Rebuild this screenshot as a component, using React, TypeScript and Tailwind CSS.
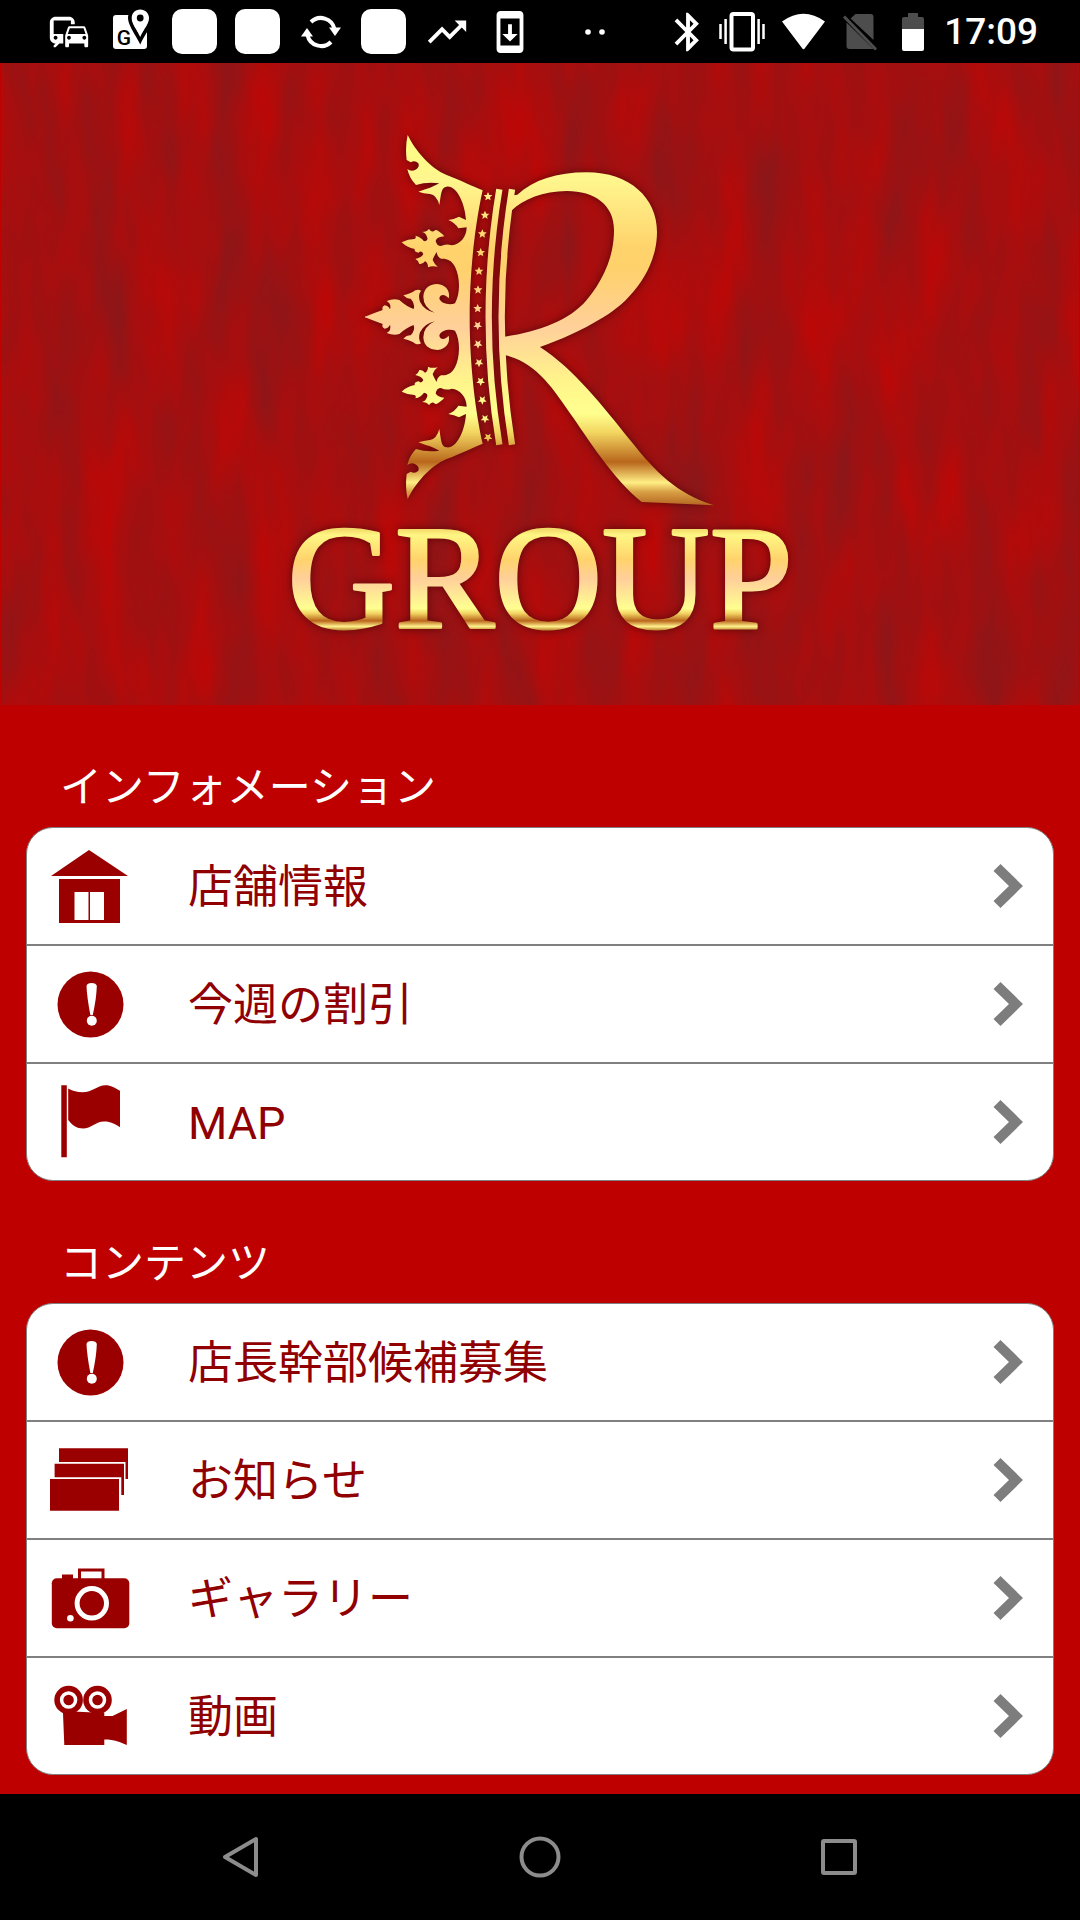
import type { ReactNode } from 'react';
import { MdBluetooth, MdCommute, MdSystemUpdate, MdTrendingUp } from 'react-icons/md';

type IconName = 'house' | 'alert' | 'flag' | 'papers' | 'camera' | 'video';

type MenuItem = { id: string; label: string; icon: IconName };

const SECTIONS: { title: string; items: MenuItem[] }[] = [
  {
    title: 'インフォメーション',
    items: [
      { id: 'shop', label: '店舗情報', icon: 'house' },
      { id: 'discount', label: '今週の割引', icon: 'alert' },
      { id: 'map', label: 'MAP', icon: 'flag' },
    ],
  },
  {
    title: 'コンテンツ',
    items: [
      { id: 'recruit', label: '店長幹部候補募集', icon: 'alert' },
      { id: 'news', label: 'お知らせ', icon: 'papers' },
      { id: 'gallery', label: 'ギャラリー', icon: 'camera' },
      { id: 'movie', label: '動画', icon: 'video' },
    ],
  },
];

const ICONS: Record<IconName, ReactNode> = {
  house: (
    <>
      <path d="M41 6 80 32H3Z" />
      <path d="M11 35H72V79H11Z" />
      <path fill="#fff" d="M26.500 48H40.500V76H26.500ZM42 48H56V76H42Z" />
    </>
  ),
  alert: (
    <>
      <circle cx="42.500" cy="42.500" r="33" />
      <path fill="#fff" d="M38.500 24Q39 21 43.600 21T48.800 24Q48.500 36 44.800 53H42.400Q39 36 38.500 24Z" />
      <circle cx="43.800" cy="58.700" r="5" fill="#fff" />
    </>
  ),
  flag: (
    <>
      <path d="M13.300 5.300H18.800V77.300H13.300Z" />
      <path d="M20.200 8.500C25 11 29 12.300 34.600 12.300C44 12.300 50 5.300 57.500 5.300C63 5.300 67 8 72 10.700V47.300C67 44 63 41.500 56 41.500C48 41.500 43 48.500 35 48.500C29 48.500 24 45 20.200 40Z" />
    </>
  ),
  papers: (
    <>
      <path d="M11 10.300H80V41H77.500V24H11Z" />
      <path d="M6.600 25.700H76V57H73.300V39.300H6.600Z" />
      <path d="M2 41H71V72.700H2Z" />
    </>
  ),
  camera: (
    <>
      <rect x="3.800" y="22.300" width="77.500" height="50" rx="5" />
      <path d="M14 24V18.500H25V24Z" />
      <path d="M31.500 23V14H55V23" fill="none" stroke="#9b0000" strokeWidth="3" />
      <circle cx="43.800" cy="47.300" r="14.700" fill="none" stroke="#fff" strokeWidth="5" />
      <circle cx="22.400" cy="62.300" r="3.300" fill="#fff" />
    </>
  ),
  video: (
    <>
      <circle cx="20.600" cy="26" r="14.300" />
      <circle cx="49.500" cy="26" r="14.300" />
      <circle cx="20.600" cy="26" r="7" fill="none" stroke="#fff" strokeWidth="3.500" />
      <circle cx="49.500" cy="26" r="7" fill="none" stroke="#fff" strokeWidth="3.500" />
      <path d="M14.900 37L56.300 39V42H64.500L78.800 35V71C72 68 67 65.500 56.300 65.500V71H16.300Z" />
    </>
  ),
};

// y centre of the crown in emblem units
const CROWN_AXIS = 591;

const STARS: [number, number][] = [
  [444, 229], [435, 285], [427, 341], [422, 397], [417, 453], [414, 509], [413, 565],
];

const STAR_POINTS = '0,-13 4,-4 13,-4 6,3 8,12 0,7 -8,12 -6,3 -13,-4 -4,-4';

function CrownHalf() {
  return (
    <g fill="#fff">
      <path
        d="M203 45C225 90 270 145 320 165C360 180 400 200 428 211C408 300 389 440 389 592H75V590
           Q105 578 128 570Q124 560 134 556Q146 558 150 568Q155 552 140 543Q160 535 178 540
           Q200 560 221 567Q226 550 212 536Q200 537 190 526Q215 520 226 511Q236 507 243 512
           Q233 525 240 545Q252 570 284 578Q250 562 250 530Q252 494 292 492C320 495 331 515 326 535
           C318 524 301 520 298 535C302 552 330 556 345 550C362 520 360 470 345 440C335 420 320 415 303 416
           Q291 410 290 396Q280 412 278 420Q284 434 293 440Q275 436 264 442Q264 428 255 424
           Q248 434 238 432Q234 420 226 417Q246 412 250 402Q244 390 236 398Q222 396 224 387
           Q200 382 185 367Q205 357 223 357Q230 354 226 347Q242 350 252 364Q264 362 262 354
           Q258 338 246 336Q260 336 267 327Q276 340 285 331Q290 328 298 335Q306 340 313 349
           Q292 350 287 362Q290 378 303 378Q318 370 335 376C360 375 380 350 380 322L355 325
           Q345 308 325 300Q342 298 357 290L378 300C375 250 350 196 320 200C303 200 303 225 298 255
           Q290 225 270 222Q250 220 235 215Q255 207 270 203Q285 197 298 190Q262 184 228 195
           Q208 175 202 147Q212 155 225 150Q240 142 235 130Q225 120 212 127L200 120Q195 80 203 45Z"
      />
      {STARS.map(([x, y]) => (
        <polygon key={y} points={STAR_POINTS} transform={`translate(${x} ${y})`} />
      ))}
    </g>
  );
}

function CrownEmblem() {
  return (
    <svg viewBox="0 0 1200 1200" className="w-[400px] drop-shadow-[0_0_4px_#5a0508]" aria-hidden="true">
      <defs>
        <linearGradient id="gold" gradientUnits="userSpaceOnUse" x1="0" y1="45" x2="0" y2="1160">
          <stop offset="0" stopColor="#ffff82" />
          <stop offset="0.120" stopColor="#fff68e" />
          <stop offset="0.300" stopColor="#ffd36c" />
          <stop offset="0.360" stopColor="#ffd16c" />
          <stop offset="0.520" stopColor="#ffd09a" />
          <stop offset="0.660" stopColor="#fff48a" />
          <stop offset="0.750" stopColor="#ffff8e" />
          <stop offset="0.800" stopColor="#f3d661" />
          <stop offset="0.880" stopColor="#b9661b" />
          <stop offset="0.935" stopColor="#ffee84" />
          <stop offset="0.960" stopColor="#d9a045" />
          <stop offset="1" stopColor="#b0601c" />
        </linearGradient>
        <mask id="emblem" maskUnits="userSpaceOnUse" x="0" y="0" width="1200" height="1200">
          <CrownHalf />
          <g transform={`translate(0 ${CROWN_AXIS * 2}) scale(1 -1)`}>
            <CrownHalf />
          </g>
          <g fill="none" stroke="#fff" strokeWidth="19">
            <path d="M478 208Q414 591 478 974" />
            <path d="M516 208Q454 591 516 974" />
          </g>
          {/* ribbon */}
          <path
            fill="#fff"
            d="M520 226L532 224C580 180 650 157 740 157C870 157 951 235 951 335C951 450 870 545 790 592
               C720 635 660 660 600 681C700 745 790 860 870 960C950 1060 1010 1120 1122 1156L905 1146
               C820 1080 740 950 690 880C630 790 580 725 494 705V650C600 634 690 600 740 540
               C790 480 822 410 822 330C822 255 765 213 680 213C610 213 550 238 514 272Z"
          />
        </mask>
      </defs>
      <rect width="1200" height="1200" fill="url(#gold)" mask="url(#emblem)" />
    </svg>
  );
}

function GroupWordmark() {
  return (
    <svg viewBox="0 -28 540 172" className="-mt-7 w-[540px] drop-shadow-[0_0_4px_#5a0508]">
      <linearGradient id="gold-text" gradientUnits="userSpaceOnUse" x1="0" y1="9" x2="0" y2="111">
        <stop offset="0" stopColor="#f2d868" />
        <stop offset="0.060" stopColor="#fff684" />
        <stop offset="0.300" stopColor="#ffd36c" />
        <stop offset="0.490" stopColor="#ffcf9a" />
        <stop offset="0.780" stopColor="#ffff90" />
        <stop offset="0.830" stopColor="#f0d060" />
        <stop offset="0.900" stopColor="#b9661b" />
        <stop offset="0.955" stopColor="#fff08a" />
        <stop offset="1" stopColor="#b07020" />
      </linearGradient>
      <text
        x="270"
        y="108"
        textAnchor="middle"
        className="font-['Liberation_Serif',serif] text-[149px]"
        fill="url(#gold-text)"
        stroke="url(#gold-text)"
        strokeWidth="3"
        strokeLinejoin="round"
      >
        GROUP
      </text>
    </svg>
  );
}

function VelvetTexture() {
  return (
    <svg className="absolute inset-0 h-full w-full" aria-hidden="true">
      <filter id="velvet" x="0" y="0" width="100%" height="100%" colorInterpolationFilters="sRGB">
        <feTurbulence type="fractalNoise" baseFrequency="0.024 0.006" numOctaves="3" seed="21" />
        <feColorMatrix values="0.260 0 0 0 0.515  -0.080 0 0 0 0.098  -0.100 0 0 0 0.110  0 0 0 0 1" />
      </filter>
      <rect width="100%" height="100%" filter="url(#velvet)" />
    </svg>
  );
}

function Banner() {
  return (
    <div className="relative mx-px">
      <VelvetTexture />
      <h1 className="relative flex flex-col items-center pt-[57px] pb-[41px]">
        <CrownEmblem />
        <GroupWordmark />
      </h1>
    </div>
  );
}

function Slot({ children }: { children: ReactNode }) {
  return <div className="flex w-[63px] justify-center">{children}</div>;
}

const Blank = () => <div className="h-[45px] w-[45px] rounded-[10px] bg-white" />;

function StatusBar() {
  return (
    <header className="flex h-[63px] items-center justify-between bg-black pr-[42px] pl-[37px] text-white">
      <div className="flex items-center">
        <Slot><MdCommute size={46} /></Slot>
        <Slot>
          <svg width="38" height="46" viewBox="0 0 38 46" fill="currentColor">
            <rect y="6" width="34" height="34" rx="3" />
            <path d="M27.200 -0.500C21 -0.500 17 4 17 9C17 16 22 21 27.200 31C32 21 37.500 16 37.500 9C37.500 4 33 -0.500 27.200 -0.500Z" stroke="#000" strokeWidth="4" />
            <path d="M27.200 0.500C22 0.500 18.700 4.500 18.700 9C18.700 15 23 19 27.200 28C31.400 19 36 15 36 9C36 4.500 32.400 0.500 27.200 0.500Z" />
            <circle cx="27.200" cy="9" r="3.400" fill="#000" />
            <text x="11" y="36" textAnchor="middle" fontSize="21" fontWeight="500" fontFamily="Roboto, sans-serif" fill="#000">G</text>
          </svg>
        </Slot>
        <Slot><Blank /></Slot>
        <Slot><Blank /></Slot>
        <Slot>
          <svg width="44" height="44" viewBox="-22 -22 44 44" fill="currentColor">
            {[0, 180].map((deg) => (
              <g key={deg} transform={`rotate(${deg})`}>
                <path d="M-10 -10A14 14 0 0 1 13.500 -3" fill="none" stroke="currentColor" strokeWidth="4" />
                <path d="M8 -4.500L20 -4.500L14 4Z" />
              </g>
            ))}
          </svg>
        </Slot>
        <Slot><Blank /></Slot>
        <Slot><MdTrendingUp size={46} /></Slot>
        <Slot><MdSystemUpdate size={46} /></Slot>
        <svg className="ml-10" width="32" height="8" viewBox="0 0 32 8" fill="currentColor">
          <circle cx="7" cy="4" r="2.800" />
          <circle cx="21" cy="4" r="2.800" />
        </svg>
      </div>

      <div className="flex items-center gap-4">
        <MdBluetooth className="-mx-2" size={46} />
        <svg width="46" height="40" viewBox="0 0 46 40" fill="none" stroke="currentColor">
          <rect x="12.500" y="2" width="21.500" height="35.500" rx="2" strokeWidth="4" />
          <path strokeWidth="2.500" d="M1.500 12V27M6.600 7V32M39.600 7V32M44.500 12V27" />
        </svg>
        <svg width="45" height="38" viewBox="0 0 44 38" fill="currentColor">
          <path d="M0.500 8.500Q22 -7 43.500 8.500L23.500 35Q22 37.500 20.500 35Z" />
        </svg>
        <svg width="38" height="38" viewBox="0 0 37 38" fill="#4d4d4d">
          <path d="M13 1H28Q31 1 31 4V27L8 5.500Z" />
          <path d="M4 9.500L31 36H7Q4 36 4 33Z" />
          <path d="M1.500 3.500L33.500 36.500" stroke="#4d4d4d" strokeWidth="3" />
        </svg>
        <svg width="32" height="38" viewBox="0 0 32 38">
          <path fill="#4d4d4d" d="M12 0H22V4H26Q28 4 28 6V17H6V6Q6 4 8 4H12Z" />
          <path fill="#fff" d="M6 16H28V36Q28 38 26 38H8Q6 38 6 36Z" />
        </svg>
        <time className="text-[37px] font-medium">17:09</time>
      </div>
    </header>
  );
}

function MenuRow({ item }: { item: MenuItem }) {
  return (
    <li>
      <a href={`#${item.id}`} className="flex h-[116px] items-center pr-[30px] pl-[21px]">
        <svg width="84" height="84" viewBox="0 0 84 84" fill="#9b0000" aria-hidden="true">
          {ICONS[item.icon]}
        </svg>
        <span className="ml-14 flex-1 pt-0.5 text-[45px] leading-none text-[#900000]">{item.label}</span>
        <svg width="30" height="44" viewBox="0 0 30 44" fill="#7d7d7d" aria-hidden="true">
          <path d="M7.500 0L30 22L7.500 44L0.500 37L16 22L0.500 7Z" />
        </svg>
      </a>
    </li>
  );
}

function NavBar() {
  return (
    <footer className="flex h-[126px] items-center bg-black px-[92px] text-[#8c8c8c]">
      <button className="flex flex-1 justify-center" aria-label="戻る">
        <svg width="40" height="44" viewBox="0 0 40 44" fill="none" stroke="currentColor" strokeWidth="4" strokeLinejoin="round">
          <path d="M35 4V40L4 22Z" />
        </svg>
      </button>
      <button className="flex flex-1 justify-center" aria-label="ホーム">
        <svg width="44" height="44" viewBox="0 0 44 44" fill="none" stroke="currentColor" strokeWidth="4">
          <circle cx="22" cy="22" r="18.500" />
        </svg>
      </button>
      <button className="flex flex-1 justify-center" aria-label="履歴">
        <svg width="44" height="44" viewBox="0 0 44 44" fill="none" stroke="currentColor" strokeWidth="4">
          <rect x="6" y="6" width="32" height="32" rx="1" />
        </svg>
      </button>
    </footer>
  );
}

export default function App() {
  return (
    <div className="flex min-h-screen flex-col bg-[#be0000] font-[Roboto,'Noto_Sans_CJK_JP',sans-serif]">
      <StatusBar />
      <main className="flex-1">
        <Banner />
        {SECTIONS.map((section) => (
          <section key={section.title}>
            <h2 className="px-[60px] pt-[60px] pb-4 text-[42px] leading-[46px] text-white">{section.title}</h2>
            <ul className="mx-[26px] divide-y-2 divide-[#808080] overflow-hidden rounded-[27px] border border-[#808080] bg-white">
              {section.items.map((item) => (
                <MenuRow key={item.id} item={item} />
              ))}
            </ul>
          </section>
        ))}
      </main>
      <NavBar />
    </div>
  );
}
